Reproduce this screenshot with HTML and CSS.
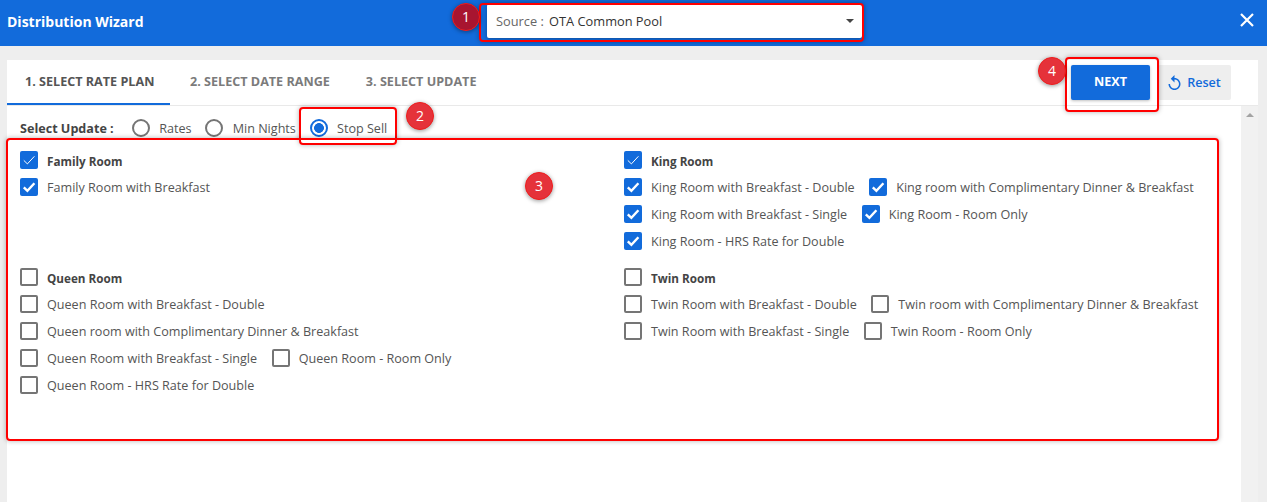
FILE: index.html
```html
<!DOCTYPE html>
<html lang="en">
<head>
<meta charset="utf-8">
<title>Distribution Wizard</title>
<link rel="stylesheet" href="styles.css">
</head>
<body>
<svg class="defs" width="0" height="0" aria-hidden="true">
  <symbol id="tick" viewBox="0 0 18 18"><path d="M3.8 9.4l3.6 3.5 7-7.6" fill="none" stroke="#fff" stroke-width="2.4"/></symbol>
  <symbol id="thin" viewBox="0 0 18 18"><path d="M3.8 9.4l3.6 3.5 7-7.6" fill="none" stroke="#fff" stroke-width="1"/></symbol>
</svg>
<header class="header">
  <h1 class="title">Distribution Wizard</h1>
  <div class="source">
    <span class="source-text"><span class="source-label">Source :</span> OTA Common Pool</span>
    <span class="caret"></span>
  </div>
  <svg class="close" viewBox="0 0 14 14" width="14" height="14"><path d="M1 1l12 12M13 1L1 13" stroke="#fff" stroke-width="2.2" fill="none"/></svg>
</header>
<main class="card">
  <nav class="tabs">
    <span class="tab active">1. SELECT RATE PLAN</span>
    <span class="tab">2. SELECT DATE RANGE</span>
    <span class="tab">3. SELECT UPDATE</span>
    <div class="actions">
      <button class="next">NEXT</button>
      <button class="reset"><svg viewBox="4 1 16 20" width="13" height="15"><path fill="#126bdb" d="M12 5V1L7 6l5 5V7c3.31 0 6 2.69 6 6s-2.69 6-6 6-6-2.69-6-6H4c0 4.42 3.58 8 8 8s8-3.58 8-8-3.58-8-8-8z"/></svg>Reset</button>
    </div>
  </nav>
  <div class="body">
    <section class="content">
      <div class="update-row">
        <span class="update-label">Select Update :</span>
        <label class="radio"><span class="circle"></span>Rates</label>
        <label class="radio"><span class="circle"></span>Min Nights</label>
        <label class="radio"><span class="circle on"></span>Stop Sell</label>
      </div>
      <div class="groups">
        <div class="group">
          <div class="item head"><span class="cb on"><svg width="18" height="18"><use href="#thin"/></svg></span>Family Room</div>
          <div class="items">
            <div class="item"><span class="cb on"><svg width="18" height="18"><use href="#tick"/></svg></span>Family Room with Breakfast</div>
          </div>
        </div>
        <div class="group">
          <div class="item head"><span class="cb on"><svg width="18" height="18"><use href="#thin"/></svg></span>King Room</div>
          <div class="items">
            <div class="item"><span class="cb on"><svg width="18" height="18"><use href="#tick"/></svg></span>King Room with Breakfast - Double</div>
            <div class="item"><span class="cb on"><svg width="18" height="18"><use href="#tick"/></svg></span>King room with Complimentary Dinner &amp; Breakfast</div>
            <div class="item"><span class="cb on"><svg width="18" height="18"><use href="#tick"/></svg></span>King Room with Breakfast - Single</div>
            <div class="item"><span class="cb on"><svg width="18" height="18"><use href="#tick"/></svg></span>King Room - Room Only</div>
            <div class="item"><span class="cb on"><svg width="18" height="18"><use href="#tick"/></svg></span>King Room - HRS Rate for Double</div>
          </div>
        </div>
        <div class="group">
          <div class="item head"><span class="cb"></span>Queen Room</div>
          <div class="items">
            <div class="item"><span class="cb"></span>Queen Room with Breakfast - Double</div>
            <div class="item"><span class="cb"></span>Queen room with Complimentary Dinner &amp; Breakfast</div>
            <div class="item"><span class="cb"></span>Queen Room with Breakfast - Single</div>
            <div class="item"><span class="cb"></span>Queen Room - Room Only</div>
            <div class="item"><span class="cb"></span>Queen Room - HRS Rate for Double</div>
          </div>
        </div>
        <div class="group">
          <div class="item head"><span class="cb"></span>Twin Room</div>
          <div class="items">
            <div class="item"><span class="cb"></span>Twin Room with Breakfast - Double</div>
            <div class="item"><span class="cb"></span>Twin room with Complimentary Dinner &amp; Breakfast</div>
            <div class="item"><span class="cb"></span>Twin Room with Breakfast - Single</div>
            <div class="item"><span class="cb"></span>Twin Room - Room Only</div>
          </div>
        </div>
      </div>
    </section>
    <div class="scrollbar"><span class="arrow"></span></div>
  </div>
</main>
<div class="mark box-1"></div>
<div class="mark box-2"></div>
<div class="mark box-3"></div>
<div class="mark box-4"></div>
<div class="badge badge-1">1</div>
<div class="badge badge-2">2</div>
<div class="badge badge-3">3</div>
<div class="badge badge-4">4</div>
</body>
</html>
```
FILE: styles.css
```css
* { box-sizing: border-box; }
html, body { margin: 0; height: 502px; overflow: hidden; }
body {
  position: relative;
  background: #eee;
  font-family: "Open Sans", "Liberation Sans", sans-serif;
  font-size: 12.6px;
  color: #555;
}
.defs { position: absolute; }
.header {
  height: 46px;
  background: #126bdb;
  display: flex;
  align-items: flex-start;
  padding-left: 7px;
}
.title {
  margin: 14px 0 0;
  width: 137px;
  font-size: 14px;
  line-height: 16px;
  font-weight: 700;
  color: #fff;
  white-space: nowrap;
}
.source {
  width: 375px;
  height: 34px;
  margin: 4px 0 0 343px;
  background: #fff;
  border-radius: 2px;
  display: flex;
  align-items: center;
  justify-content: space-between;
  padding: 0 8px 0 9px;
  font-size: 12.8px;
  color: #333;
  box-shadow: 0 1px 4px rgba(0,0,0,.3);
}
.source-label { color: #666; margin-right: 2px; }
.caret {
  width: 0; height: 0;
  border-left: 4px solid transparent;
  border-right: 4px solid transparent;
  border-top: 4px solid #444;
}
.close { margin: 13px 13px 0 auto; }
.card {
  margin: 14px 9px 0 7px;
  height: 442px;
  background: #fff;
  display: flex;
  flex-direction: column;
}
.tabs {
  height: 46px;
  flex: none;
  display: flex;
  border-bottom: 1px solid #e9e9e9;
}
.tab {
  height: 45px;
  padding: 0 18px;
  line-height: 43px;
  font-size: 12.6px;
  font-weight: 700;
  color: #7b7b7b;
  white-space: nowrap;
}
.tab.active {
  width: 163px;
  margin-right: 2px;
  padding-right: 0;
  color: #555;
  border-bottom: 2px solid #126bdb;
}
.actions {
  margin-left: auto;
  padding: 5px 27px 0 0;
  display: flex;
  gap: 8px;
  align-items: flex-start;
}
.next, .reset {
  height: 35px;
  border: 0;
  border-radius: 2px;
  font-family: inherit;
  font-size: 12.6px;
  font-weight: 600;
  padding: 0;
}
.next {
  width: 79px;
  background: #126bdb;
  color: #fff;
  font-weight: 700;
  padding-bottom: 2px;
  box-shadow: 0 1px 3px rgba(0,0,0,.25);
}
.reset {
  width: 73px;
  background: #eee;
  color: #126bdb;
  display: flex;
  align-items: center;
  justify-content: center;
  gap: 6px;
}
.body { flex: 1; display: flex; min-height: 0; }
.content { flex: 1; padding: 12px 0 0 13px; min-width: 0; }
.update-row {
  height: 20px;
  display: flex;
  align-items: center;
  color: #555;
}
.update-label { width: 112px; font-weight: 700; color: #444; }
.radio { display: flex; align-items: center; gap: 9.15px; margin-right: 14px; white-space: nowrap; }
.circle {
  width: 18px; height: 18px;
  border-radius: 50%;
  border: 2px solid #757575;
  display: block;
}
.circle.on {
  border-color: #126bdb;
  background: radial-gradient(circle, #126bdb 0 4.6px, #fff 5.2px);
}
.groups {
  margin-top: 13px;
  display: grid;
  grid-template-columns: 604px 1fr;
  row-gap: 9px;
}
.group { padding-right: 20px; }
.group:nth-child(even) { padding-right: 29px; }
.items { display: flex; flex-wrap: wrap; column-gap: 14.5px; }
.item {
  display: flex;
  align-items: center;
  gap: 9px;
  height: 18px;
  margin-bottom: 9px;
  white-space: nowrap;
}
.item.head { align-items: flex-end; font-weight: 700; color: #444; font-size: 11.7px; }
.cb {
  width: 18px; height: 18px;
  flex: none;
  border: 2px solid #757575;
  border-radius: 2px;
  display: block;
  background: #fff;
}
.cb.on { border: 0; background: #126bdb; }
.cb svg { display: block; }
.scrollbar {
  width: 17px;
  flex: none;
  background: #f1f1f1;
  display: flex;
  justify-content: center;
  padding-top: 7px;
}
.arrow {
  width: 0; height: 0;
  border-left: 4px solid transparent;
  border-right: 4px solid transparent;
  border-bottom: 4px solid #a3a3a3;
}
.mark {
  position: absolute;
  border: 2px solid #f00;
  border-radius: 4px;
  box-shadow: 0 0 5px rgba(0,0,0,.3);
  pointer-events: none;
}
.box-1 { left: 479px; top: 3px; width: 385px; height: 39px; }
.box-2 { left: 299px; top: 107px; width: 98px; height: 38px; }
.box-3 { left: 6px; top: 138px; width: 1213px; height: 303px; }
.box-4 { left: 1065px; top: 57px; width: 94px; height: 55px; }
.badge {
  position: absolute;
  width: 28px; height: 28px;
  border-radius: 50%;
  background: #e5323a;
  border: 1px solid #f01c1c;
  color: #fff;
  font-size: 14px;
  line-height: 26px;
  text-align: center;
  box-shadow: 0 1px 4px rgba(0,0,0,.4);
}
.badge-1 { left: 452px; top: 3px; background: #a81530; }
.badge-2 { left: 406px; top: 102px; }
.badge-3 { left: 525px; top: 172px; }
.badge-4 { left: 1038px; top: 57px; }
```
